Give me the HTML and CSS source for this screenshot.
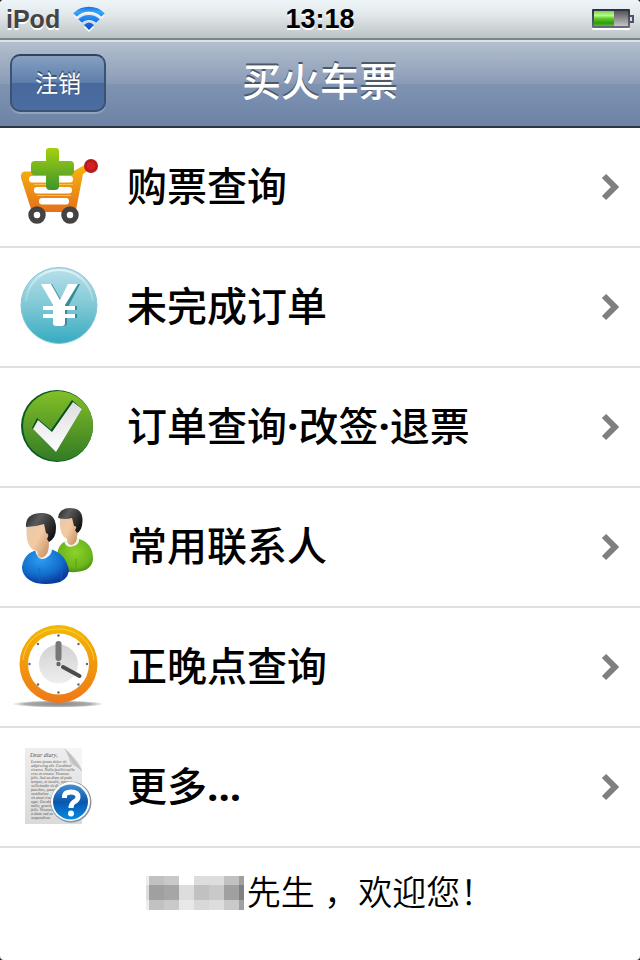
FILE: index.html
```html
<!DOCTYPE html>
<html lang="zh-CN">
<head>
  <meta charset="utf-8">
  <meta name="viewport" content="width=device-width, initial-scale=1">
  <title>买火车票</title>
  <link rel="stylesheet" href="styles.css">
</head>
<body>
  <div class="page">
    <div class="status-bar">
      <div class="carrier">
        <span>iPod</span>
        <svg class="wifi" width="34" height="26" viewBox="0 0 34 26" aria-hidden="true">
          <defs>
            <linearGradient id="wifi-fill" gradientUnits="userSpaceOnUse" x1="0" y1="0" x2="0" y2="24">
              <stop offset="0" stop-color="#1768d8"/>
              <stop offset="0.25" stop-color="#35a5fb"/>
              <stop offset="0.6" stop-color="#1b7bf0"/>
              <stop offset="1" stop-color="#0a48d0"/>
            </linearGradient>
          </defs>
          <g fill="none" stroke="#fff" stroke-width="4" transform="translate(0 2)">
            <path d="M3 9A20 20 0 0 1 31 9"/>
            <path d="M8 14A13 13 0 0 1 26 14"/>
            <path d="M12 19Q17 14 22 19L17 24Z" fill="#fff" stroke="none"/>
          </g>
          <g fill="none" stroke="url(#wifi-fill)" stroke-width="5">
            <path d="M3 9A20 20 0 0 1 31 9"/>
            <path d="M8 15A13 13 0 0 1 26 15"/>
            <path d="M12 19Q17 14 22 19L17 24Z" fill="url(#wifi-fill)" stroke="none"/>
          </g>
        </svg>
      </div>
      <div class="clock">13:18</div>
      <div class="battery">
        <svg width="42" height="22" viewBox="0 0 42 22" aria-hidden="true">
          <defs>
            <linearGradient id="charge" x1="0" y1="0" x2="0" y2="1">
              <stop offset="0" stop-color="#72d84a"/>
              <stop offset="0.3" stop-color="#bdf88b"/>
              <stop offset="0.5" stop-color="#5fcb2c"/>
              <stop offset="0.8" stop-color="#2f9a0c"/>
              <stop offset="1" stop-color="#55bd2b"/>
            </linearGradient>
            <linearGradient id="empty" x1="0" y1="0" x2="0" y2="1">
              <stop offset="0" stop-color="#555"/>
              <stop offset="1" stop-color="#c4c4c4"/>
            </linearGradient>
            <linearGradient id="shell" x1="0" y1="0" x2="0" y2="1">
              <stop offset="0" stop-color="#2b2f45"/>
              <stop offset="1" stop-color="#6a6d80"/>
            </linearGradient>
          </defs>
          <rect x="0" y="3" width="38" height="19" rx="1" fill="#fff"/>
          <rect x="0" y="1" width="38" height="19" rx="1" fill="url(#shell)"/>
          <path d="M38 7h4v8h-4" fill="#505468"/>
          <rect x="38" y="9" width="2" height="4" fill="#d8dde0"/>
          <rect x="2" y="3" width="20" height="15" fill="url(#charge)"/>
          <rect x="22" y="3" width="14" height="15" fill="url(#empty)"/>
        </svg>
      </div>
    </div>

    <header class="nav-bar">
      <button type="button" class="logout">注销</button>
      <h1 class="title">买火车票</h1>
    </header>

    <nav>
      <ul class="menu">
        <li>
          <a class="menu-link" href="#buy">
            <svg class="icon" viewBox="0 -7 120 118" aria-hidden="true">
              <defs>
                <linearGradient id="cart" x1="0" y1="0" x2="0" y2="1">
                  <stop offset="0" stop-color="#f7b90a"/>
                  <stop offset="1" stop-color="#e56f1b"/>
                </linearGradient>
                <linearGradient id="plus" x1="0" y1="0" x2="0" y2="1">
                  <stop offset="0" stop-color="#a5d010"/>
                  <stop offset="1" stop-color="#3d942e"/>
                </linearGradient>
              </defs>
              <path d="M25 36.500H73L88 28L92 33L83 39L76 75Q75 77 72 77H35Q32 77 31 74L21 43Q20 37 25 36.500Z" fill="url(#cart)"/>
              <g fill="#fff">
                <rect x="29" y="41" width="44" height="6.500" rx="3"/>
                <rect x="34" y="52" width="38" height="6.500" rx="3"/>
                <rect x="39" y="63" width="30" height="6.500" rx="3"/>
              </g>
              <path d="M34 49.500H73M37 60.500H71" stroke="#f7c04a" stroke-width="1"/>
              <path d="M49 13h7q3 0 3 3v10h11q4 0 4 4v6q0 4 -4 4H59v11q0 4 -4 4h-5q-4 0 -4 -4V40H35q-4 0 -4 -4v-6q0 -4 4 -4h11V16q0 -3 3 -3Z" fill="url(#plus)"/>
              <circle cx="91" cy="31" r="7" fill="#b71c1c"/>
              <circle cx="91" cy="31" r="4" fill="#d6201f"/>
              <g fill="#fff" stroke="#434343" stroke-width="5.500">
                <circle cx="37" cy="80" r="6"/>
                <circle cx="70" cy="80" r="6"/>
              </g>
            </svg>
            <span class="label">购票查询</span>
            <svg class="arrow" viewBox="0 0 20 28" aria-hidden="true"><path d="M3 3L14 14L3 25"/></svg>
          </a>
        </li>
        <li>
          <a class="menu-link" href="#unfinished">
            <svg class="icon" viewBox="0 -7 120 118" aria-hidden="true">
              <defs>
                <linearGradient id="coin" x1="0" y1="0" x2="0" y2="1">
                  <stop offset="0" stop-color="#b9e0eb"/>
                  <stop offset="0.5" stop-color="#7fc8d5"/>
                  <stop offset="1" stop-color="#35abc1"/>
                </linearGradient>
                <linearGradient id="gloss" x1="0" y1="0" x2="0" y2="1">
                  <stop offset="0" stop-color="#e0f3f8"/>
                  <stop offset="1" stop-color="#9bd3de"/>
                </linearGradient>
              </defs>
              <circle cx="59" cy="50.500" r="38" fill="url(#coin)" stroke="#86c7d4" stroke-width="1"/>
              <path d="M26 46C28 26 43 15 59 15S90 26 93 46" fill="none" stroke="url(#gloss)" stroke-width="2"/>
              <g>
                <path d="M42 29H52L61 45L69 29H80L69 50V51H77V55H67V59H77V63H67V68Q67 71 64 71H57Q54 71 54 68V63H44V59H54V55H44V51H53V50Z" fill="#378b99"/>
                <path d="M41 29H51L60 45L68 29H78L65 50V51H75V55H65V59H75V63H65V68Q65 71 62 71H56Q53 71 53 68V63H43V59H53V55H43V51H53V50Z" fill="#fff"/>
              </g>
            </svg>
            <span class="label">未完成订单</span>
            <svg class="arrow" viewBox="0 0 20 28" aria-hidden="true"><path d="M3 3L14 14L3 25"/></svg>
          </a>
        </li>
        <li>
          <a class="menu-link" href="#orders">
            <svg class="icon" viewBox="0 -7 120 118" aria-hidden="true">
              <defs>
                <linearGradient id="green" x1="0" y1="0" x2="0" y2="1">
                  <stop offset="0" stop-color="#83bf27"/>
                  <stop offset="1" stop-color="#327b25"/>
                </linearGradient>
                <linearGradient id="tick" x1="0" y1="0" x2="0" y2="1">
                  <stop offset="0" stop-color="#ddd"/>
                  <stop offset="1" stop-color="#fff"/>
                </linearGradient>
              </defs>
              <circle cx="57" cy="51" r="36" fill="#07591f"/>
              <circle cx="58" cy="51" r="35" fill="url(#green)"/>
              <path d="M32 53L37 43L51 55L72 25L82 34L56 77Z" fill="#064e21"/>
              <path d="M33 54L38 45L52 57L73 27L82 34L56 77Z" fill="url(#tick)"/>
            </svg>
            <span class="label">订单查询<b>·</b>改签<b>·</b>退票</span>
            <svg class="arrow" viewBox="0 0 20 28" aria-hidden="true"><path d="M3 3L14 14L3 25"/></svg>
          </a>
        </li>
        <li>
          <a class="menu-link" href="#contacts">
            <svg class="icon" viewBox="0 -7 120 118" aria-hidden="true">
              <defs>
                <linearGradient id="skin" x1="0" y1="0" x2="1" y2="0.800">
                  <stop offset="0" stop-color="#e6c8aa"/>
                  <stop offset="0.5" stop-color="#f2cba4"/>
                  <stop offset="1" stop-color="#c88d60"/>
                </linearGradient>
                <linearGradient id="hair" x1="0" y1="0" x2="1" y2="0.600">
                  <stop offset="0" stop-color="#222"/>
                  <stop offset="0.400" stop-color="#5c5c5c"/>
                  <stop offset="1" stop-color="#151515"/>
                </linearGradient>
                <radialGradient id="blue-shirt" cx="0.400" cy="0.300" r="0.700">
                  <stop offset="0" stop-color="#2d9df0"/>
                  <stop offset="0.600" stop-color="#1470ce"/>
                  <stop offset="1" stop-color="#0a3a9d"/>
                </radialGradient>
                <radialGradient id="green-shirt" cx="0.500" cy="0.400" r="0.650">
                  <stop offset="0" stop-color="#8ed32a"/>
                  <stop offset="0.700" stop-color="#6bb51c"/>
                  <stop offset="1" stop-color="#43880f"/>
                </radialGradient>
              </defs>
              <path d="M57 60Q58 49 66 46L79 44Q93 48 93 64Q92 76 76 77Q63 78 57 71Z" fill="url(#green-shirt)"/>
              <path d="M64 46Q66 54 74 51Q80 49 79 43L76 42Z" fill="#f0f5ea"/>
              <path d="M60 22Q59 37 64 42L67 44Q67 50 72 50Q77 48 77 42L80 24Q70 17 60 22Z" fill="url(#skin)"/>
              <path d="M58 23Q59 13 70 13Q83 13 82.500 26Q82 36 77 38L75 35Q78 31 74 31L72 23Q65 25 58 23Z" fill="url(#hair)"/>
              <path d="M22 72Q24 58 37 55L50 54Q66 58 69 76Q67 86 56 88Q46 90 36 88Q22 83 22 72Z" fill="url(#blue-shirt)"/>
              <path d="M39 73L40 87M62 73L61 86" stroke="#1568c1" stroke-width="1" opacity="0.700"/>
              <path d="M76 64L76 75" stroke="#5a9e18" stroke-width="1"/>
              <path d="M35 55Q38 67 46 63Q52 60 52 54L48 52Z" fill="#eef7fb"/>
              <path d="M26.500 30Q26 45 29 50Q31 55 37 56L38 61Q42 65 46 60Q49 57 49 47L52 30Q39 22 26.500 30Z" fill="url(#skin)"/>
              <path d="M26 32Q25 19 40 18Q56 17 56 33Q56 43 49 47L47 44Q50 39 46 38L44 29Q35 32 26 32Z" fill="url(#hair)"/>
            </svg>
            <span class="label">常用联系人</span>
            <svg class="arrow" viewBox="0 0 20 28" aria-hidden="true"><path d="M3 3L14 14L3 25"/></svg>
          </a>
        </li>
        <li>
          <a class="menu-link" href="#punctuality">
            <svg class="icon" viewBox="0 -7 120 118" aria-hidden="true">
              <defs>
                <linearGradient id="rim" x1="0" y1="0" x2="0" y2="1">
                  <stop offset="0" stop-color="#f3b900"/>
                  <stop offset="1" stop-color="#ee7819"/>
                </linearGradient>
                <linearGradient id="dial" x1="0" y1="0" x2="0" y2="1">
                  <stop offset="0" stop-color="#d2d2d2"/>
                  <stop offset="1" stop-color="#eee"/>
                </linearGradient>
                <radialGradient id="ground">
                  <stop offset="0" stop-color="#888"/>
                  <stop offset="0.700" stop-color="#aaa"/>
                  <stop offset="1" stop-color="#fff"/>
                </radialGradient>
              </defs>
              <ellipse cx="58" cy="89" rx="46" ry="3.500" fill="url(#ground)"/>
              <circle cx="58.500" cy="49" r="39" fill="url(#rim)"/>
              <path d="M23 45C25 26 40 14 58 14S92 26 94 45" fill="none" stroke="#f9d04a" stroke-width="1"/>
              <circle cx="58.500" cy="49" r="30.500" fill="#fff"/>
              <circle cx="58.500" cy="49" r="19.500" fill="url(#dial)"/>
              <g fill="#666">
                <circle cx="58.500" cy="20.500" r="1.200"/>
                <circle cx="78.500" cy="29" r="1.200"/>
                <circle cx="87" cy="49" r="1.200"/>
                <circle cx="78.500" cy="69.500" r="1.200"/>
                <circle cx="58.500" cy="77.500" r="1.200"/>
                <circle cx="38" cy="69.500" r="1.200"/>
                <circle cx="29.500" cy="49" r="1.200"/>
                <circle cx="38" cy="29" r="1.200"/>
              </g>
              <rect x="55.500" y="26" width="6" height="20" rx="3" fill="#777"/>
              <path d="M63 52L79.500 61" stroke="#4c4c4c" stroke-width="4" stroke-linecap="round"/>
              <circle cx="58.500" cy="49" r="2.200" fill="#666"/>
            </svg>
            <span class="label">正晚点查询</span>
            <svg class="arrow" viewBox="0 0 20 28" aria-hidden="true"><path d="M3 3L14 14L3 25"/></svg>
          </a>
        </li>
        <li>
          <a class="menu-link" href="#more">
            <svg class="icon" viewBox="0 -7 120 118" aria-hidden="true">
              <defs>
                <linearGradient id="paper" x1="0" y1="0" x2="0" y2="1">
                  <stop offset="0" stop-color="#eee"/>
                  <stop offset="1" stop-color="#dadada"/>
                </linearGradient>
                <linearGradient id="fold" x1="0" y1="1" x2="1" y2="0">
                  <stop offset="0.200" stop-color="#fff"/>
                  <stop offset="0.500" stop-color="#bbb"/>
                  <stop offset="0.700" stop-color="#fff"/>
                </linearGradient>
                <linearGradient id="help" x1="0" y1="0" x2="0" y2="1">
                  <stop offset="0" stop-color="#448ed0"/>
                  <stop offset="0.500" stop-color="#0957ae"/>
                  <stop offset="1" stop-color="#078be4"/>
                </linearGradient>
              </defs>
              <path d="M25 13H64L82 37V89H25Z" fill="url(#paper)"/>
              <path d="M64 13H82V37Q76 29 69 30Q71 24 64 13Z" fill="#f5f5f5"/>
              <path d="M64 13Q71 24 69 30Q76 29 82 37Q81 27 64 13Z" fill="url(#fold)"/>
              <g class="letter">
                <text class="greeting" x="30" y="22">Dear diary,</text>
                <text x="31" y="28">Lorem ipsum dolor sit</text>
                <text x="31" y="32">adipiscing elit. Curabitur</text>
                <text x="31" y="36">viverra. Nulla facilisi nulla</text>
                <text x="31" y="40">cras et ornare. Vivamus</text>
                <text x="31" y="44">felis. Sed eu diam id pede</text>
                <text x="31" y="48">tempus, et iaculis, nunc</text>
                <text x="31" y="52">sollicitudin sit diam id</text>
                <text x="31" y="56">faucibus, quam a</text>
                <text x="31" y="60">vestibulum</text>
                <text x="31" y="64">sit amet risus.</text>
                <text x="31" y="68">eget. Curabitur</text>
                <text x="31" y="72">nulla, gravida</text>
                <text x="31" y="76">felis. Vivamus</text>
                <text x="31" y="80">a diam sed eu</text>
                <text x="31" y="84">suspendisse.</text>
              </g>
              <circle cx="71" cy="67" r="20.500" fill="#8b959d"/>
              <circle cx="70.500" cy="66.500" r="19.500" fill="#fff"/>
              <circle cx="70.500" cy="67" r="17.500" fill="url(#help)"/>
              <path d="M64.500 63V61Q65 57 71 57Q78 57 78 62Q78 65 74 67Q71 69 71 73" fill="none" stroke="#fff" stroke-width="5"/>
              <circle cx="71" cy="78.500" r="3" fill="#fff"/>
            </svg>
            <span class="label">更多<b>...</b></span>
            <svg class="arrow" viewBox="0 0 20 28" aria-hidden="true"><path d="M3 3L14 14L3 25"/></svg>
          </a>
        </li>
      </ul>
    </nav>

    <footer class="welcome">
      <svg class="masked-name" width="98" height="34" viewBox="0 0 98 34" shape-rendering="crispEdges" aria-hidden="true">
        <path fill="#eee" d="M0 0h3v9H0zM0 24h3v10H0z"/>
        <path fill="#ddd" d="M0 9h3v15H0zM48 0h30v9H48zM33 9h15v15H33zM63 24h15v10H63z"/>
        <path fill="#c1c1c1" d="M3 0h15v9H3zM3 24h15v10H3zM78 0h15v9H78zM48 9h15v15H48z"/>
        <path fill="#c9c9c9" d="M18 0h15v9H18zM18 24h15v10H18zM63 9h15v15H63zM78 24h15v10H78z"/>
        <path fill="#a0a0a0" d="M3 9h15v15H3zM78 9h15v15H78zM93 0h5v9h-5zM93 24h5v10h-5z"/>
        <path fill="#a6a6a6" d="M18 9h15v15H18z"/>
        <path fill="#e8e8e8" d="M33 24h15v10H33z"/>
        <path fill="#d8d8d8" d="M48 24h15v10H48z"/>
        <path fill="#808080" d="M93 9h5v15h-5z"/>
      </svg>
      <span>先生 ，欢迎您！</span>
    </footer>
  </div>
</body>
</html>
```
FILE: styles.css
```css
* {
  box-sizing: border-box;
}

body {
  margin: 0;
  background-color: #222;
  font-family: "Liberation Sans", "Noto Sans CJK SC", sans-serif;
  color: #000;
}

.page {
  display: flex;
  flex-direction: column;
  min-height: 100vh;
  background-color: #fff;
  border-radius: 4px;
  overflow: hidden;
}

/* Status bar */
.status-bar {
  display: grid;
  grid-template-columns: 1fr auto 1fr;
  align-items: center;
  height: 40px;
  padding: 0 6px;
  background: linear-gradient(#eef5f8, #e2e8ea 40%, #bcc3c5);
  border-bottom: 2px solid #7b8588;
  font-weight: bold;
  text-shadow: 0 2px 0 #fff;
}

.carrier {
  display: flex;
  align-items: center;
  gap: 12px;
  color: #444;
  font-size: 25px;
}

.clock {
  font-size: 27px;
}

.battery {
  display: flex;
  justify-content: flex-end;
}

/* Navigation bar */
.nav-bar {
  display: grid;
  grid-template-columns: 1fr auto 1fr;
  align-items: center;
  height: 88px;
  padding: 0 10px 2px;
  background: linear-gradient(#b3bfce, #8a9bb6 50%, #7f94b3 50%, #6d83a5);
  border-top: 2px solid #dbe1e7;
  border-bottom: 2px solid #2d3642;
}

.logout {
  justify-self: start;
  width: 96px;
  height: 58px;
  padding: 0 0 2px;
  border: 2px solid #3b5275;
  border-top-color: #33435c;
  border-radius: 10px;
  background: linear-gradient(#87a0c2, #5d7dab 50%, #47699d 50%, #4a6c9f);
  box-shadow: 0 2px 0 #93a5be;
  color: #fff;
  font-family: inherit;
  font-size: 23px;
  text-shadow: 0 -2px 0 #3d5273;
  cursor: pointer;
}

.title {
  margin: 0;
  font-size: 39px;
  font-weight: 500;
  line-height: 60px;
  color: #fff;
  text-shadow: 0 -2px 0 #4d5967;
}

/* Menu */
.menu {
  margin: 0;
  padding: 0;
  list-style: none;
}

.menu-link {
  display: flex;
  align-items: center;
  gap: 7px;
  height: 120px;
  padding-right: 19px;
  border-bottom: 2px solid #e0e0e0;
  color: #000;
  text-decoration: none;
}

.icon {
  flex: none;
  width: 120px;
  height: 118px;
}

.label {
  flex: 1;
  font-size: 40px;
  font-weight: 500;
  line-height: 60px;
}

.label b {
  font-family: "Open Sans", sans-serif;
  line-height: 1;
}

.arrow {
  width: 20px;
  height: 28px;
  fill: none;
  stroke: #7f7f7f;
  stroke-width: 6;
}

.letter {
  font-family: "Liberation Serif", serif;
  font-size: 4px;
  font-style: italic;
  fill: #555;
}

.greeting {
  font-size: 6px;
}

/* Welcome line */
.welcome {
  display: flex;
  justify-content: center;
  align-items: center;
  gap: 3px;
  padding-top: 20px;
  font-size: 34px;
  font-weight: 350;
  line-height: 50px;
}
```
